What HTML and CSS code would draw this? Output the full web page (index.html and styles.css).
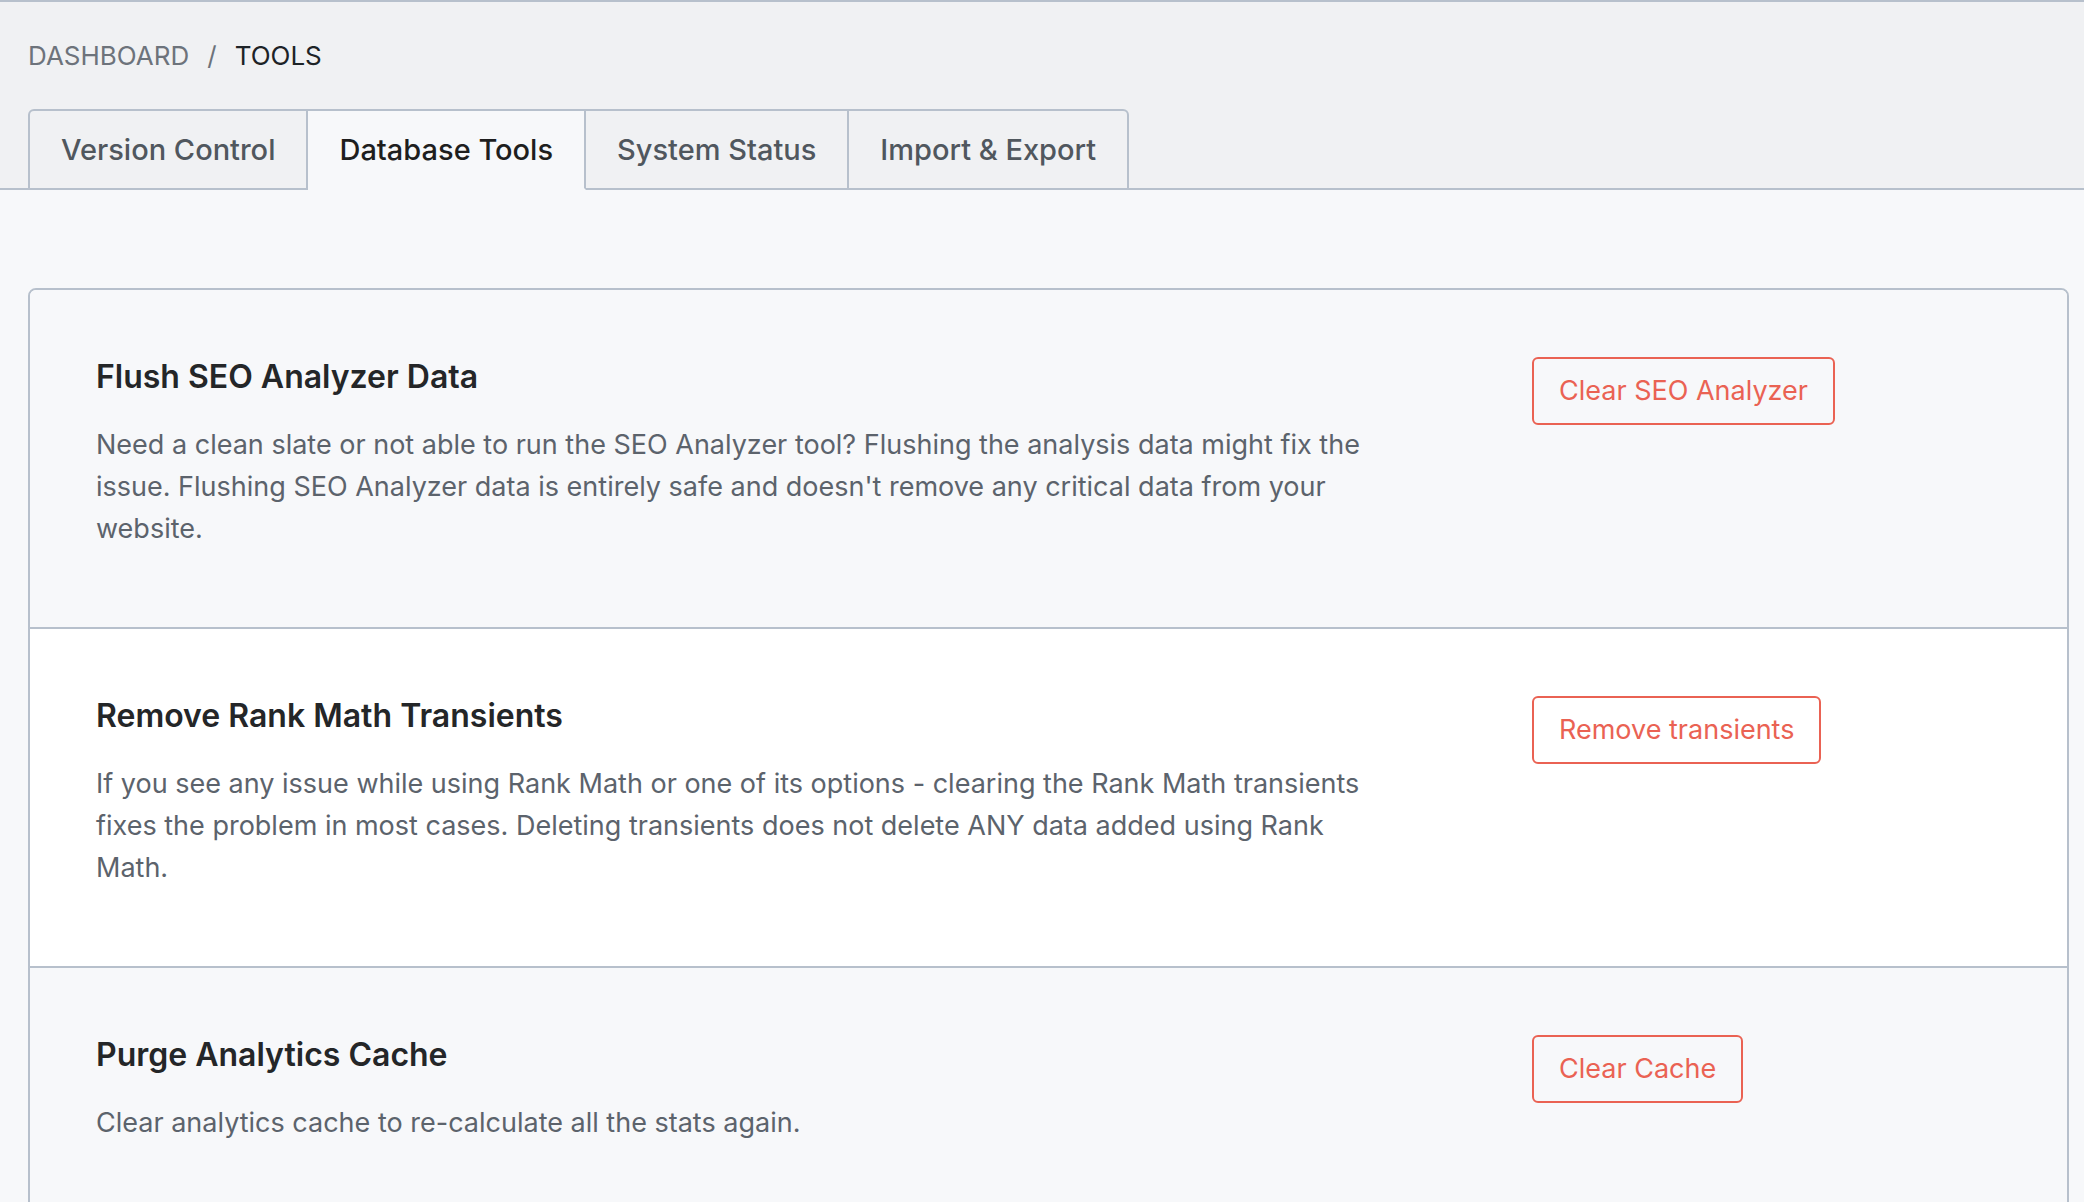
FILE: index.html
```html
<!DOCTYPE html>
<html lang="en">
<head>
<meta charset="utf-8">
<title>Tools</title>
<link rel="stylesheet" href="styles.css">
</head>
<body>
<header class="header">
  <nav class="breadcrumb">
    <span class="crumb-link">DASHBOARD</span>
    <span class="crumb-sep">/</span>
    <span class="crumb-current">TOOLS</span>
  </nav>
  <div class="tabs">
    <div class="tab tab-first">Version Control</div>
    <div class="tab tab-active">Database Tools</div>
    <div class="tab">System Status</div>
    <div class="tab tab-last">Import &amp; Export</div>
  </div>
</header>
<main class="content">
  <div class="card">
    <section class="row row-alt">
      <div class="row-text">
        <h3 class="row-title">Flush SEO Analyzer Data</h3>
        <p class="row-desc">Need a clean slate or not able to run the SEO Analyzer tool? Flushing the analysis data might fix the issue. Flushing SEO Analyzer data is entirely safe and doesn't remove any critical data from your website.</p>
      </div>
      <div class="row-action"><button class="btn">Clear SEO Analyzer</button></div>
    </section>
    <section class="row">
      <div class="row-text">
        <h3 class="row-title">Remove Rank Math Transients</h3>
        <p class="row-desc">If you see any issue while using Rank Math or one of its options - clearing the Rank Math transients fixes the problem in most cases. Deleting transients does not delete ANY data added using Rank Math.</p>
      </div>
      <div class="row-action"><button class="btn">Remove transients</button></div>
    </section>
    <section class="row row-alt">
      <div class="row-text">
        <h3 class="row-title">Purge Analytics Cache</h3>
        <p class="row-desc">Clear analytics cache to re-calculate all the stats again.</p>
      </div>
      <div class="row-action"><button class="btn">Clear Cache</button></div>
    </section>
  </div>
</main>
</body>
</html>
```
FILE: styles.css
```css
* { box-sizing: border-box; }
html, body { margin: 0; padding: 0; }
body {
  background: #f7f8fa;
  font-family: Inter, "Noto Sans", sans-serif;
  color: #242628;
  height: 1202px;
  overflow: hidden;
}
.header {
  background: #f0f1f3;
  border-top: 2px solid #b7c0cc;
  border-bottom: 2px solid #b7c0cc;
  padding: 34px 0 0 28px;
}
.breadcrumb {
  font-size: 26px;
  line-height: 40px;
  height: 40px;
  display: flex;
  gap: 18px;
}
.crumb-link, .crumb-sep { color: #6d737b; }
.crumb-current { color: #1d2327; }
.tabs {
  display: flex;
  margin-top: 33px;
  margin-bottom: -2px;
}
.tab {
  height: 81px;
  padding: 0 31px;
  display: flex;
  align-items: center;
  font-size: 29px;
  font-weight: 500;
  color: #50575e;
  background: #f0f1f3;
  border: 2px solid #b7c0cc;
  border-left-width: 0;
}
.tab-first { border-left-width: 2px; border-top-left-radius: 6px; }
.tab-last { border-top-right-radius: 6px; }
.tab-active {
  background: #f7f8fa;
  color: #1e1e1e;
  border-bottom-color: #f7f8fa;
}
.content {
  padding: 98px 15px 0 28px;
}
.card {
  border: 2px solid #b7c0cc;
  border-radius: 8px;
  background: #fff;
  overflow: hidden;
}
.row {
  display: grid;
  grid-template-columns: 1280px 1fr;
  column-gap: 156px;
  padding: 67px 66px 77px 66px;
  background: #fff;
  border-top: 2px solid #b7c0cc;
}
.row:first-child { border-top: 0; }
.row-alt { background: #f7f8fa; }
.row-title {
  margin: 0;
  font-size: 32px;
  line-height: 40px;
  font-weight: 600;
  color: #242628;
}
.row-desc {
  margin: 27px 0 0;
  font-size: 27px;
  line-height: 42px;
  color: #5c636c;
}
.row-action { display: flex; align-items: flex-start; }
.btn {
  font-family: inherit;
  font-size: 27px;
  line-height: 36px;
  padding: 14px 25px;
  color: #ea6253;
  background: transparent;
  border: 2px solid #ea6253;
  border-radius: 6px;
}
```
